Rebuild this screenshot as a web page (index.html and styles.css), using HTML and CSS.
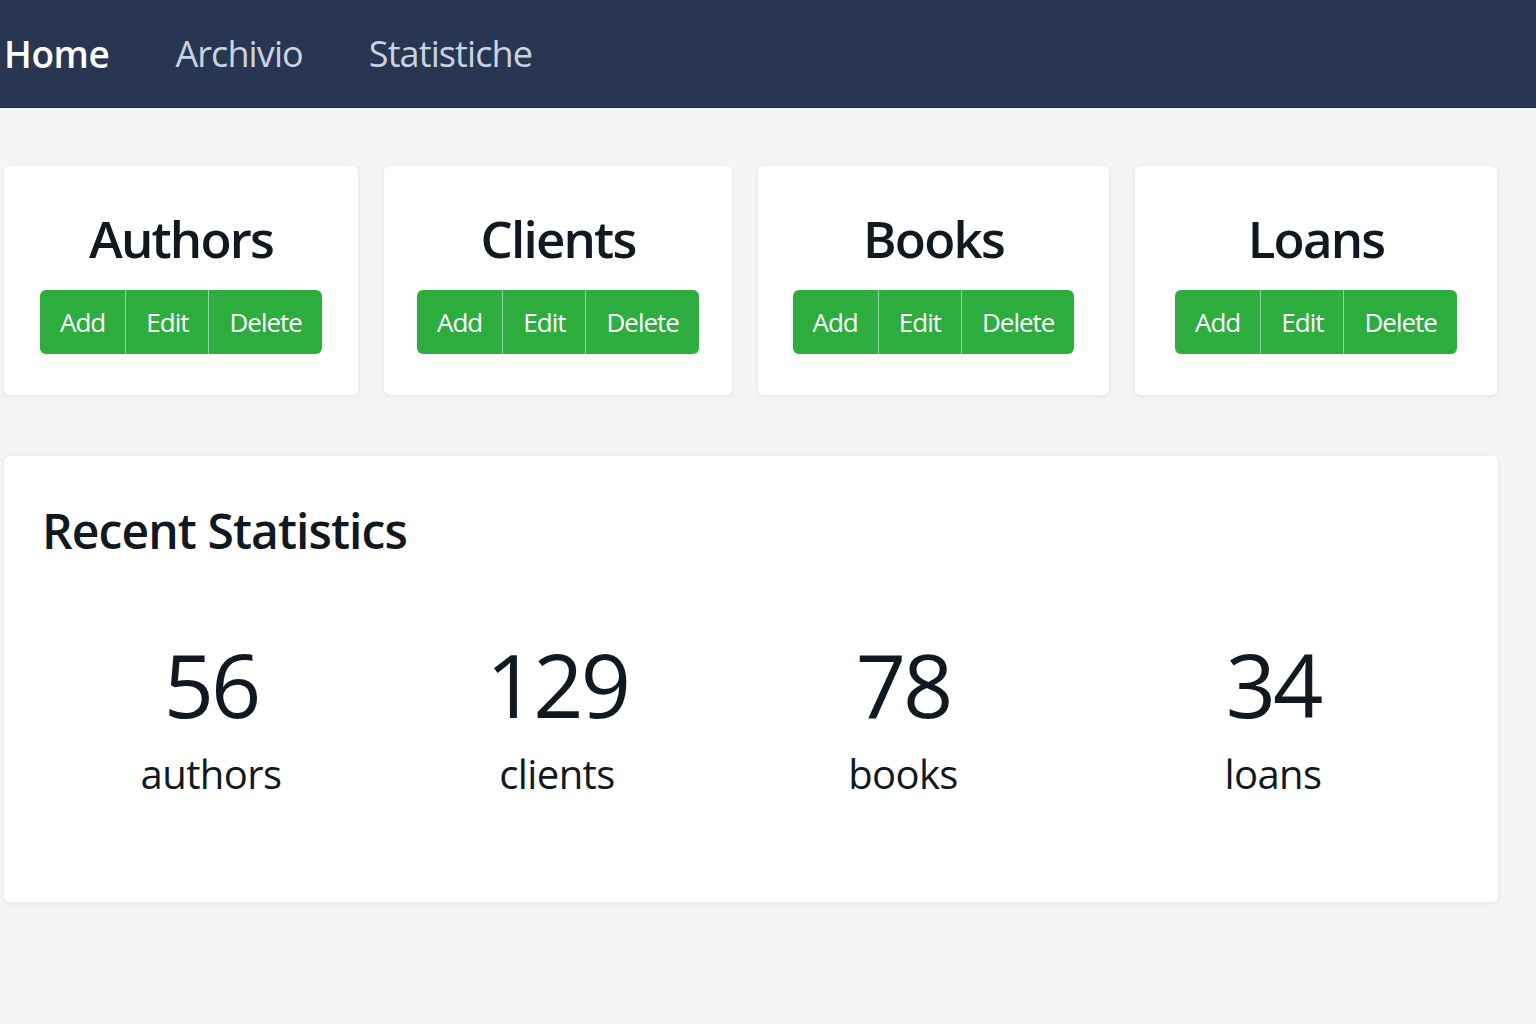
FILE: index.html
```html
<!DOCTYPE html>
<html lang="en">
<head>
<meta charset="utf-8">
<title>Dashboard</title>
<link rel="stylesheet" href="styles.css">
</head>
<body>
<nav class="navbar">
  <a class="nav-link active" href="#">Home</a>
  <a class="nav-link" href="#">Archivio</a>
  <a class="nav-link" href="#">Statistiche</a>
</nav>
<main class="content">
  <section class="cards">
    <div class="card">
      <h2 class="card-title">Authors</h2>
      <div class="btn-group"><button class="btn">Add</button><button class="btn">Edit</button><button class="btn">Delete</button></div>
    </div>
    <div class="card">
      <h2 class="card-title">Clients</h2>
      <div class="btn-group"><button class="btn">Add</button><button class="btn">Edit</button><button class="btn">Delete</button></div>
    </div>
    <div class="card">
      <h2 class="card-title">Books</h2>
      <div class="btn-group"><button class="btn">Add</button><button class="btn">Edit</button><button class="btn">Delete</button></div>
    </div>
    <div class="card">
      <h2 class="card-title">Loans</h2>
      <div class="btn-group"><button class="btn">Add</button><button class="btn">Edit</button><button class="btn">Delete</button></div>
    </div>
  </section>
  <section class="stats">
    <h2 class="stats-title">Recent Statistics</h2>
    <div class="stats-grid">
      <div class="stat"><div class="stat-num">56</div><div class="stat-label">authors</div></div>
      <div class="stat"><div class="stat-num">129</div><div class="stat-label">clients</div></div>
      <div class="stat"><div class="stat-num">78</div><div class="stat-label">books</div></div>
      <div class="stat"><div class="stat-num">34</div><div class="stat-label">loans</div></div>
    </div>
  </section>
</main>
</body>
</html>
```
FILE: styles.css
```css
* { box-sizing: border-box; }
html, body { margin: 0; padding: 0; }
body {
  background: #f2f4f6;
  font-family: "Open Sans", "Noto Sans", sans-serif;
  color: #111820;
  width: 1536px;
  height: 1024px;
  overflow: hidden;
}
.navbar {
  height: 108px;
  background: #283651;
  display: flex;
  align-items: center;
  padding: 0 0 0 4px;
  gap: 66px;
  border-bottom: 1px solid #1e2a40;
}
.nav-link {
  font-size: 36px;
  color: #c9d4e2;
  text-decoration: none;
  letter-spacing: -0.9px;
}
.nav-link.active {
  color: #ffffff;
  font-weight: 600;
  font-size: 37px;
  letter-spacing: -0.4px;
}
.content {
  padding: 58px 38px 0 4px;
}
.cards {
  display: grid;
  grid-template-columns: 354px 348px 351px 362px;
  column-gap: 26px;
}
.card {
  background: #ffffff;
  border-radius: 6px;
  box-shadow: 0 1px 4px rgba(30, 40, 60, 0.08);
  height: 229px;
  display: flex;
  flex-direction: column;
  align-items: center;
  padding-top: 39px;
}
.card-title {
  margin: 0;
  font-size: 51px;
  font-weight: 600;
  line-height: 66px;
  letter-spacing: -1.8px;
  color: #111820;
}
.btn-group {
  display: flex;
  margin-top: 19px;
  border-radius: 6px;
  overflow: hidden;
}
.btn {
  font-family: inherit;
  background: #2cad3d;
  color: #ffffff;
  border: none;
  font-size: 26px;
  height: 64px;
  padding: 0 20px;
  letter-spacing: -1px;
  border-left: 1px solid #8ed39a;
}
.btn:first-child { border-left: none; }
.stats {
  margin-top: 61px;
  background: #ffffff;
  border-radius: 6px;
  box-shadow: 0 1px 4px rgba(30, 40, 60, 0.08);
  height: 446px;
  padding: 40px 40px 0 38px;
}
.stats-title {
  margin: 0;
  font-size: 48px;
  font-weight: 600;
  line-height: 70px;
  letter-spacing: -0.9px;
  color: #111820;
}
.stats-grid {
  display: grid;
  grid-template-columns: 346px 346px 346px 394px;
  margin: 58px 0 0 -4px;
}
.stat {
  display: flex;
  flex-direction: column;
  align-items: center;
}
.stat-num {
  font-size: 88px;
  line-height: 120px;
  font-weight: 400;
  letter-spacing: -3px;
}
.stat-label {
  font-size: 40px;
  line-height: 54px;
  margin-top: 3px;
  letter-spacing: -0.6px;
}
```
